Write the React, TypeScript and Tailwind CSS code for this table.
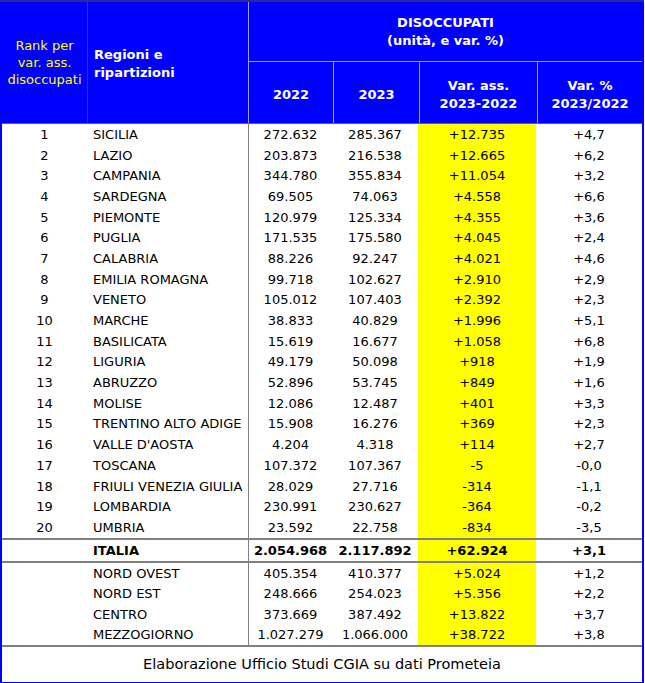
const rows: [string, string, string, string, string, string][] = [
  ["1", "SICILIA", "272.632", "285.367", "+12.735", "+4,7"],
  ["2", "LAZIO", "203.873", "216.538", "+12.665", "+6,2"],
  ["3", "CAMPANIA", "344.780", "355.834", "+11.054", "+3,2"],
  ["4", "SARDEGNA", "69.505", "74.063", "+4.558", "+6,6"],
  ["5", "PIEMONTE", "120.979", "125.334", "+4.355", "+3,6"],
  ["6", "PUGLIA", "171.535", "175.580", "+4.045", "+2,4"],
  ["7", "CALABRIA", "88.226", "92.247", "+4.021", "+4,6"],
  ["8", "EMILIA ROMAGNA", "99.718", "102.627", "+2.910", "+2,9"],
  ["9", "VENETO", "105.012", "107.403", "+2.392", "+2,3"],
  ["10", "MARCHE", "38.833", "40.829", "+1.996", "+5,1"],
  ["11", "BASILICATA", "15.619", "16.677", "+1.058", "+6,8"],
  ["12", "LIGURIA", "49.179", "50.098", "+918", "+1,9"],
  ["13", "ABRUZZO", "52.896", "53.745", "+849", "+1,6"],
  ["14", "MOLISE", "12.086", "12.487", "+401", "+3,3"],
  ["15", "TRENTINO ALTO ADIGE", "15.908", "16.276", "+369", "+2,3"],
  ["16", "VALLE D'AOSTA", "4.204", "4.318", "+114", "+2,7"],
  ["17", "TOSCANA", "107.372", "107.367", "-5", "-0,0"],
  ["18", "FRIULI VENEZIA GIULIA", "28.029", "27.716", "-314", "-1,1"],
  ["19", "LOMBARDIA", "230.991", "230.627", "-364", "-0,2"],
  ["20", "UMBRIA", "23.592", "22.758", "-834", "-3,5"],
];

const areas: [string, string, string, string, string][] = [
  ["NORD OVEST", "405.354", "410.377", "+5.024", "+1,2"],
  ["NORD EST", "248.666", "254.023", "+5.356", "+2,2"],
  ["CENTRO", "373.669", "387.492", "+13.822", "+3,7"],
  ["MEZZOGIORNO", "1.027.279", "1.066.000", "+38.722", "+3,8"],
];

const cols = "grid grid-cols-[85px_161px_84px_86px_118px_106px]";

function Row({
  rank,
  name,
  a,
  b,
  diff,
  pct,
  bold,
  h,
}: {
  rank: string;
  name: string;
  a: string;
  b: string;
  diff: string;
  pct: string;
  bold?: boolean;
  h: string;
}) {
  return (
    <div className={`${cols} ${h} ${bold ? "font-bold" : ""}`}>
      <div className="flex items-center justify-center">{rank}</div>
      <div className="flex items-center pl-[6px] whitespace-nowrap">{name}</div>
      <div className="flex items-center justify-center border-l border-[#808080] whitespace-nowrap">{a}</div>
      <div className="flex items-center justify-center">{b}</div>
      <div className="flex items-center justify-center bg-[#ffff00]">{diff}</div>
      <div className="flex items-center justify-center">{pct}</div>
    </div>
  );
}

export default function App() {
  return (
    <div
      className="w-[644px] bg-white text-[13px] leading-none text-black"
      style={{ fontFamily: '"DejaVu Sans", Verdana, sans-serif' }}
    >
      <div className="border-t-2 border-[#2a2a9a]">
        <div className="border-x-2 border-b-2 border-[#0000ff]">
          {/* header */}
          <div className={`${cols} h-[121px] bg-[#0000ff]`}>
            <div className="flex flex-col items-center justify-center text-center leading-[17px] text-[#ffff00]">
              <span>Rank per</span>
              <span>var. ass.</span>
              <span>disoccupati</span>
            </div>
            <div className="flex flex-col justify-center border-l border-[#2b2bff] pl-[6px] pt-[2px] font-bold leading-[18px] text-white">
              <span>Regioni e</span>
              <span>ripartizioni</span>
            </div>
            <div className="col-span-4 flex flex-col border-l border-[#9c9cff] font-bold text-white">
              <div className="flex h-[60px] flex-col items-center justify-center border-b border-[#9c9cff] leading-[18px]">
                <span>DISOCCUPATI</span>
                <span>(unità, e var. %)</span>
              </div>
              <div className="grid flex-1 grid-cols-[84px_86px_118px_105px] leading-[18px]">
                <div className="flex items-center justify-center pt-[4px]">2022</div>
                <div className="flex items-center justify-center border-l border-[#9c9cff] pt-[4px]">2023</div>
                <div className="flex flex-col items-center justify-center border-l border-[#9c9cff] pt-[4px] text-center">
                  <span>Var. ass.</span>
                  <span>2023-2022</span>
                </div>
                <div className="flex flex-col items-center justify-center border-l border-[#9c9cff] pt-[4px] text-center">
                  <span>Var. %</span>
                  <span>2023/2022</span>
                </div>
              </div>
            </div>
          </div>

          {/* regions */}
          <div className="border-t border-[#5a5a9a]">
            {rows.map((r) => (
              <Row key={r[0]} rank={r[0]} name={r[1]} a={r[2]} b={r[3]} diff={r[4]} pct={r[5]} h="h-[20.7px]" />
            ))}
          </div>

          <div className="border-y-2 border-[#808080]">
            <Row rank="" name="ITALIA" a="2.054.968" b="2.117.892" diff="+62.924" pct="+3,1" bold h="h-[21px]" />
          </div>

          <div className="border-b-2 border-[#808080]">
            {areas.map((r) => (
              <Row key={r[0]} rank="" name={r[0]} a={r[1]} b={r[2]} diff={r[3]} pct={r[4]} h="h-[20.6px]" />
            ))}
          </div>

          <div className="flex h-[35px] items-center justify-center pb-[1px] text-[14.5px]">
            Elaborazione Ufficio Studi CGIA su dati Prometeia
          </div>
        </div>
      </div>
    </div>
  );
}
